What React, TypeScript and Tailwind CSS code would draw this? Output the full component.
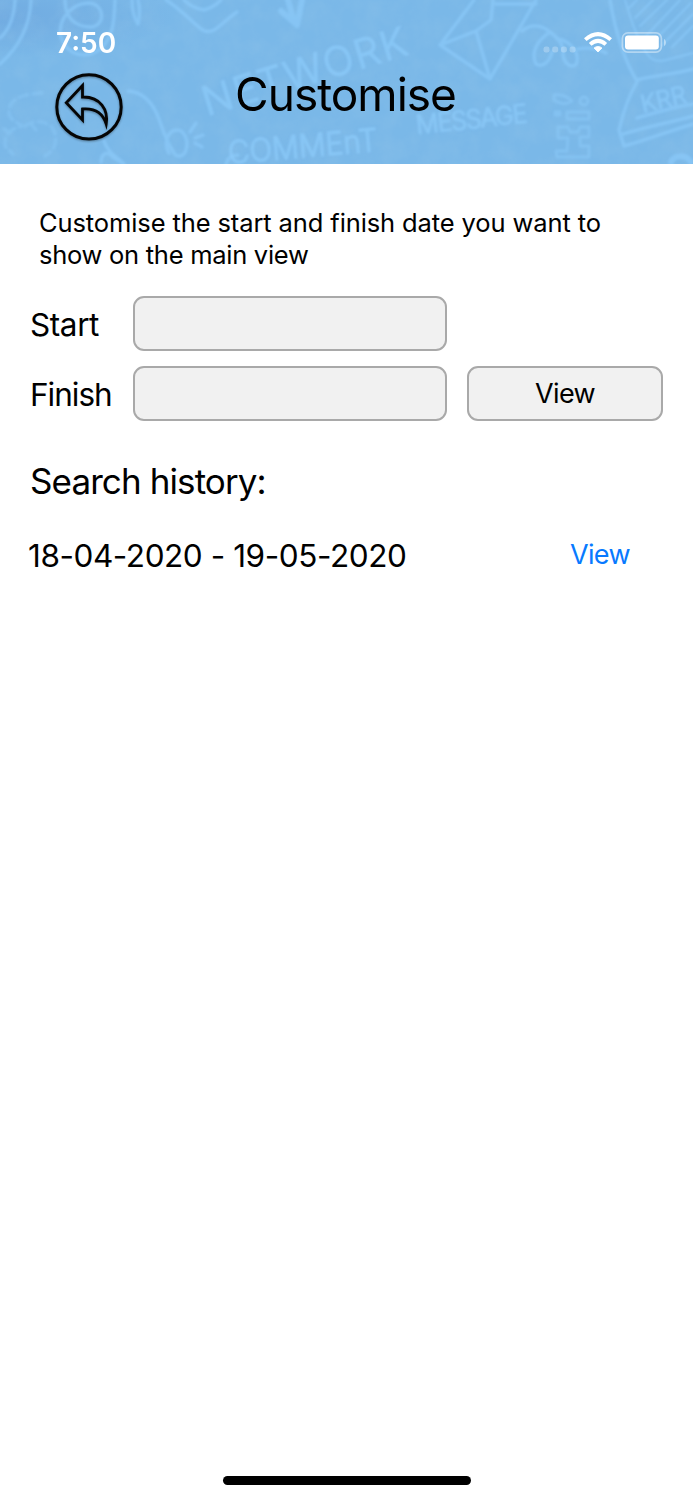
import { clsx } from "clsx";

const history = [{ from: "18-04-2020", to: "19-05-2020" }];

const HeaderDoodles = () => (
  <svg className="absolute inset-0 h-full w-full" viewBox="0 0 693 164" fill="none" aria-hidden="true">
    <defs>
      <filter id="paper" x="0" y="0" width="100%" height="100%">
        <feTurbulence type="fractalNoise" baseFrequency="0.05" numOctaves="4" seed="4" />
        <feColorMatrix values="0 0 0 0 0.36  0 0 0 0 0.6  0 0 0 0 0.82  0.9 0 0 0 -0.3" />
      </filter>
      <filter id="chalk" x="-5%" y="-5%" width="110%" height="110%">
        <feGaussianBlur stdDeviation="1" />
      </filter>
      <radialGradient id="corner" cx="0" cy="0.1" r="0.25">
        <stop offset="0" stopColor="#6aa2dc" stopOpacity="0.6" />
        <stop offset="1" stopColor="#6aa2dc" stopOpacity="0" />
      </radialGradient>
    </defs>
    <rect width="693" height="164" fill="url(#corner)" />
    <rect width="693" height="164" filter="url(#paper)" opacity="0.35" />

    <g stroke="#8dcbfb" strokeOpacity="0.62" strokeWidth="3.4" strokeLinecap="round" strokeLinejoin="round" filter="url(#chalk)">
      {/* rainbow and loops */}
      <path d="M31 0C30 28 18 48 0 64M15 0C14 18 8 31 0 38" />
      <path d="M65 0c0 22 15 27 26 27 15-1 14-24-3-24C68 4 53 26 64 44c10 15 30 14 41 0 10-14 9-29 10-44" />
      <path d="M132 0c0 10 2 18 6 24 2-8 2-16 0-24" />
      <path d="M166 0c12 7 23 19 34 28 4 4 8 5 14 2 8-5 15-13 23-18M184 0c6 6 13 9 20 10 7-2 13-6 17-10" />
      <path d="M281 11l16 14 5-25M288 0l5 18" strokeWidth="6" />

      {/* tulip */}
      <path d="M128 91c16 1 25 12 31 28 4 12 7 22 15 34 3 5 10 4 12-3 3-10-2-20-9-20-9 0-14 13-8 23" />
      <path d="M190 132l6-9M195 138l8-3M195 143l7 4" />

      {/* gift */}
      <path d="M42 93c-18 1-34 5-33 20 1 8 9 9 13 13-12 3-18 9-17 20l8 8M25 126c9-6 18-6 27 1 7 11 4 23-7 29M4 129l6 4M31 124l5 6" strokeDasharray="9 5" strokeOpacity="0.4" />
      <path d="M101 162c1-11 7-10 12-5l11 7M104 141c3 10 11 15 19 22" />
      <path d="M226 164c2-7 6-9 12-9" />

      {/* folded plane */}
      <path d="M474 0l-34 45 50 34M440 45l36-14 14 48 46-79M476 31l15-11 2-20M496 4h40" />

      {/* spectacles */}
      <path d="M522 31c8-7 19-7 28 1-12 8-20 20-14 32 7 4 14-3 16-12M550 32c7 5 12 10 13 18-1 16 12 20 14 12 2-11-8-22-20-23" />
      <path d="M578 49c10-2 20 0 28 4" />

      {/* robot */}
      <g strokeWidth="2.8" strokeOpacity="0.5">
        <path d="M554 95c7-1 13 1 18 6-5 4-12 3-18-1ZM555 112h5v3h-5zM567 112h22v7h-22z" />
        <circle cx="584" cy="101" r="4" />
        <path d="M558 127h10l2 5h8l2-5h9v10h-9v9h9v11h-32l-1-6h11l1-13h-10z" />
      </g>

      {/* open box */}
      <path d="M610 0c5 29 12 57 27 81M637 80c20-5 38-6 56-11M637 82c-9 15-14 31-18 48l5 16c22-6 46-15 69-22M620 135c24-8 49-12 73-19M637 118c20-6 37-11 56-14" />
      <path d="M625 0c7 23 13 41 23 55 4 6 10 7 18 5l27-7M629 8l8-8M635 18l18-18M640 26l27-26M646 36l34-36M653 42l38-39M661 46l32-32M672 47l21-21" strokeWidth="2" />
      <path d="M671 162c3-7 15-8 20 0" strokeWidth="6" />
    </g>

    <g fill="#8dcbfb" fillOpacity="0.62" stroke="#8dcbfb" strokeOpacity="0.45" strokeWidth="1.6" fontFamily="Inter, sans-serif" fontWeight="300" filter="url(#chalk)">
      <text transform="translate(207 116) rotate(-17)" fontSize="40" textLength="212">NETWORK</text>
      <text transform="translate(229 164) rotate(-5)" fontSize="32" textLength="150" lengthAdjust="spacingAndGlyphs">COMMEnT</text>
      <text transform="translate(417 134) rotate(-6)" fontSize="25" textLength="112">MESSAGE</text>
      <text transform="translate(643 113) rotate(-13)" fontSize="24" textLength="46">KRR</text>
    </g>
  </svg>
);

const BackIcon = () => (
  <svg className="h-[68px] w-[68px] drop-shadow-[0_1px_1px_rgba(0,0,0,0.35)]" viewBox="0 0 68 68" fill="none" stroke="#050505">
    <circle cx="34" cy="33.9" r="32.2" strokeWidth="3" />
    <path d="M27.5 12.5 11.3 29.8 27.5 47V36C39 35 47.5 39 51.2 51 53.5 37 45.5 23.5 27.5 24Z" strokeWidth="2.8" strokeMiterlimit="8" />
  </svg>
);

const StatusIcons = () => (
  <svg className="h-6 w-[124px]" viewBox="0 0 124 24" fill="white">
    <g opacity="0.25">
      <rect x="0.5" y="14.5" width="6" height="6" rx="2.3" />
      <rect x="9.2" y="14.5" width="6" height="6" rx="2.3" />
      <rect x="17.9" y="14.5" width="6" height="6" rx="2.3" />
      <rect x="26.6" y="14.5" width="6" height="6" rx="2.3" />
    </g>
    <path d="M55 20 51 16Q55 12.8 59 16Z" stroke="white" strokeWidth="0.8" strokeLinejoin="round" />
    <path d="M42.3 7.6Q55-3.4 67.7 7.6M47.2 12.4Q55 5.4 62.8 12.4" fill="none" stroke="white" strokeWidth="3.9" />
    <rect x="79.4" y="0.9" width="39" height="19.2" rx="5.5" fill="none" stroke="white" strokeOpacity="0.42" strokeWidth="1.7" />
    <rect x="82" y="3.6" width="33.8" height="13.8" rx="3" />
    <path d="M121 7c2.6 1 2.6 6 0 7Z" opacity="0.45" />
  </svg>
);

const fieldStyle = "h-[55px] rounded-[11px] border-2 border-[#a9a9a9] bg-[#f1f1f1]";

const DateField = ({ label, labelClass }: { label: string; labelClass: string }) => (
  <>
    <label htmlFor={label} className={clsx("w-[103px] shrink-0 pt-[3px] text-[31.5px] leading-[38px]", labelClass)}>
      {label}
    </label>
    <input id={label} className={clsx(fieldStyle, "w-[314px] px-3 text-2xl outline-none")} />
  </>
);

const App = () => {
  return (
    <div className="relative flex h-[1500px] w-[693px] flex-col overflow-hidden bg-white font-[Inter,sans-serif] text-black">
      <header className="relative h-[164px] shrink-0 overflow-hidden bg-[#7ab8e8]">
        <HeaderDoodles />
        <div className="relative flex items-start justify-between pt-[26px] pr-[26px] pl-14 text-white">
          <span className="text-[28px] leading-[34px] font-semibold">7:50</span>
          <div className="pt-1.5">
            <StatusIcons />
          </div>
        </div>
        <div className="relative grid grid-cols-[1fr_auto_1fr] items-start pt-1.5 pr-[57px] pl-[55px]">
          <button type="button" aria-label="Back" className="mt-[7px] w-[68px]">
            <BackIcon />
          </button>
          <h1 className="text-[46px] leading-[56px] tracking-[-1px]">Customise</h1>
        </div>
      </header>

      <main className="px-[30px] pt-[43px]">
        <p className="pl-[9px] text-[25.5px] leading-8 tracking-[-0.11px]">
          Customise the start and finish date you want to
          <br />
          <span className="tracking-[-0.27px]">show on the main view</span>
        </p>

        <div className="mt-[25px] flex flex-col gap-[15px]">
          <div className="flex items-center">
            <DateField label="Start" labelClass="tracking-[-0.4px]" />
          </div>
          <div className="flex items-center">
            <DateField label="Finish" labelClass="tracking-[-1px]" />
            <button type="button" className={clsx(fieldStyle, "ml-5 w-[196px] pt-0.5 text-[27px] tracking-[-0.6px]")}>
              View
            </button>
          </div>
        </div>

        <h2 className="mt-[38px] text-[35px] leading-[44px] tracking-[-0.9px]">Search history:</h2>

        {history.map((item) => (
          <div key={item.from} className="mt-[31px] flex items-start justify-between pr-[33px]">
            <span className="-ml-0.5 text-[31.5px] leading-[44px] tracking-[-0.43px]">
              {item.from} - {item.to}
            </span>
            <button type="button" className="text-[27px] leading-[42px] tracking-[-0.6px] text-[#087aff]">
              View
            </button>
          </div>
        ))}
      </main>

      <div className="mx-auto mt-auto mb-[15px] h-[9px] w-[248px] shrink-0 rounded-full bg-black" />
    </div>
  );
};

export default App;
